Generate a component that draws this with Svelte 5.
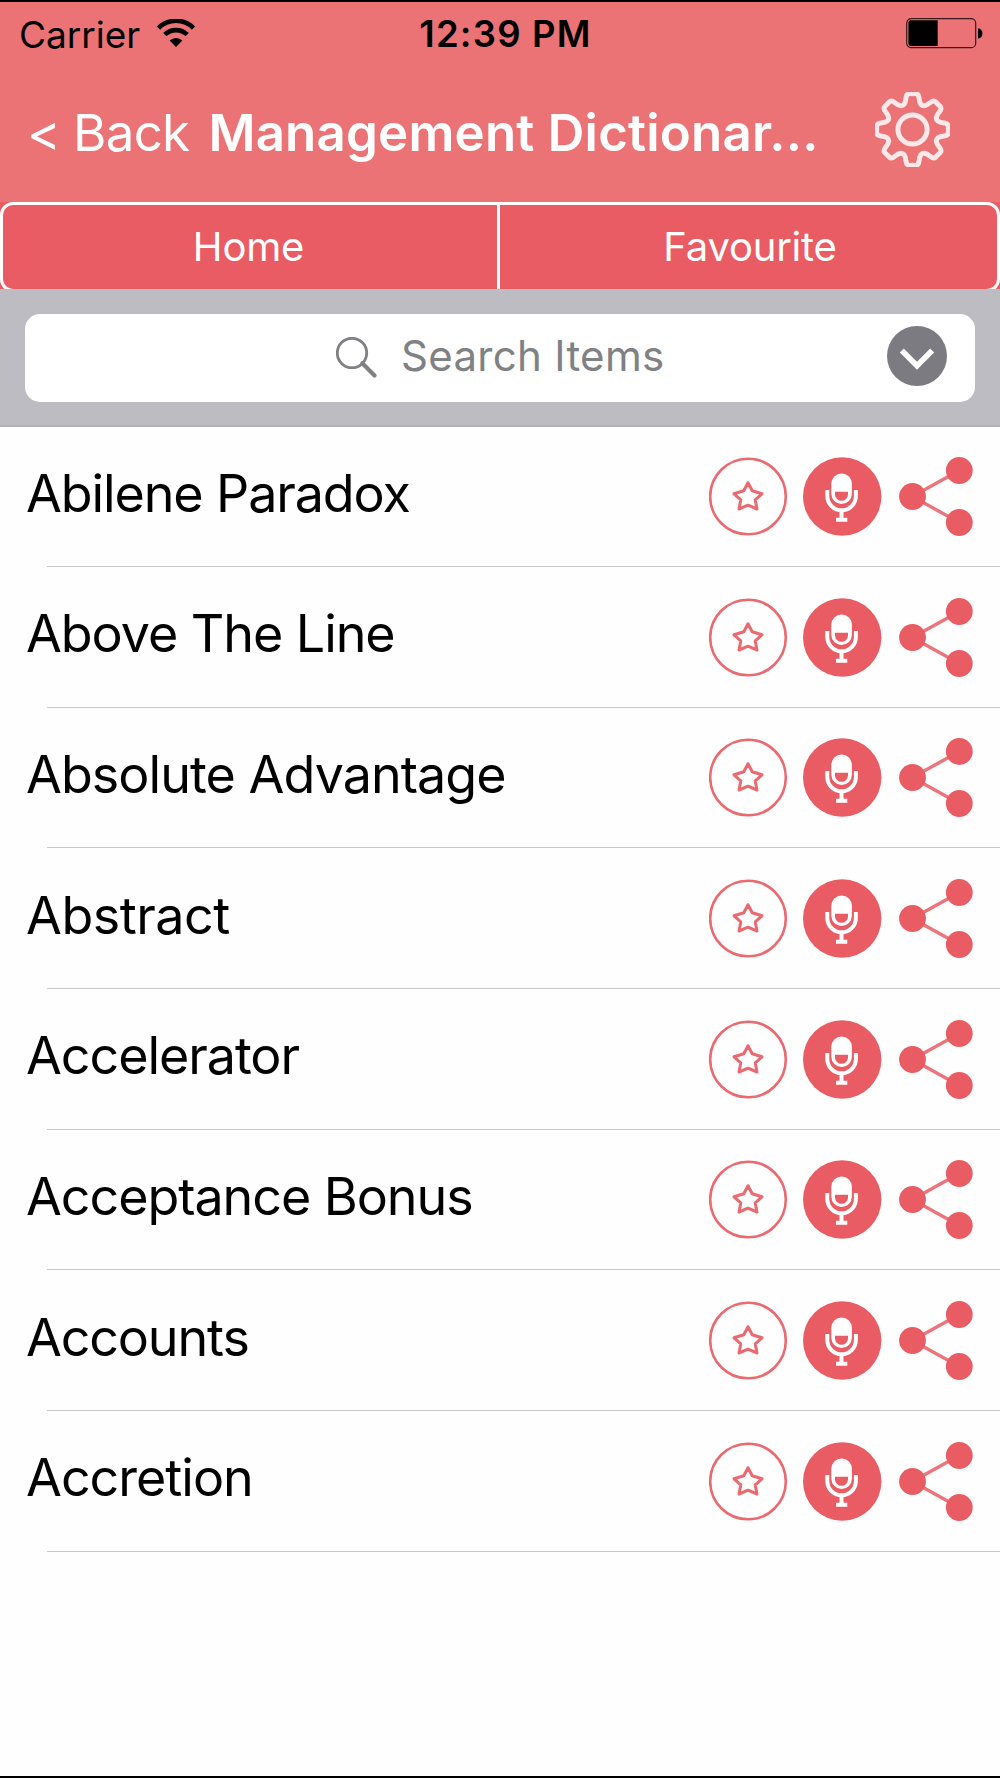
<script>
  const terms = [
    { name: 'Abilene Paradox', tracking: -1.1 },
    { name: 'Above The Line', tracking: -1.05 },
    { name: 'Absolute Advantage', tracking: -0.95 },
    { name: 'Abstract', tracking: -0.5 },
    { name: 'Accelerator', tracking: -1.05 },
    { name: 'Acceptance Bonus', tracking: -1.05 },
    { name: 'Accounts', tracking: -1.15 },
    { name: 'Accretion', tracking: -1 }
  ];

  // Gear outline: eight rounded teeth, each traced through smoothed control points.
  function gearPath() {
    const profile = [
      [-22.5, 25.5], [-14.5, 28], [-9.5, 36.5], [0, 35.8], [9.5, 36.5], [14.5, 28]
    ];
    const points = [];
    for (let tooth = 0; tooth < 8; tooth++) {
      for (const [angle, radius] of profile) {
        const a = ((tooth * 45 + angle - 90) * Math.PI) / 180;
        points.push([37.5 + radius * Math.cos(a), 37.5 + radius * Math.sin(a)]);
      }
    }
    const mid = (p, q) => `${((p[0] + q[0]) / 2).toFixed(2)} ${((p[1] + q[1]) / 2).toFixed(2)}`;
    const last = points[points.length - 1];
    let d = `M${mid(last, points[0])}`;
    points.forEach((p, i) => {
      d += `Q${p[0].toFixed(2)} ${p[1].toFixed(2)} ${mid(p, points[(i + 1) % points.length])}`;
    });
    return d + 'Z';
  }
</script>

<div class="screen">
  <header>
    <div class="status">
      <div class="carrier">
        <span>Carrier</span>
        <svg width="38" height="28" viewBox="0 0 38 28">
          <path d="M1.5 9A24.8 24.8 0 0 1 36.5 9" fill="none" stroke="#000" stroke-width="4.6" />
          <path d="M7.8 15.7A16 16 0 0 1 30.2 15.7" fill="none" stroke="#000" stroke-width="4.6" />
          <path d="M19 28L12.6 21.6A9.2 9.2 0 0 1 25.4 21.6Z" />
        </svg>
      </div>
      <span class="time">12:39 PM</span>
      <svg class="battery" width="77" height="31" viewBox="0 0 77 31">
        <rect x="0.7" y="0.7" width="69" height="29" rx="4.5" fill="none" stroke="#3a1a1c" stroke-width="1.2" />
        <path d="M4.5 2.2H31.7V28H4.5Q2.4 28 2.4 25.5V4.7Q2.4 2.2 4.5 2.2Z" />
        <path d="M72 10.3Q76.4 11 76.4 15.5T72 20.7Z" />
      </svg>
    </div>
    <nav>
      <span class="back"><span>&lt;</span><span>Back</span></span>
      <h1>Management Dictionar...</h1>
      <svg class="gear" width="75" height="75" viewBox="0 0 75 75" fill="none" stroke="#fff" stroke-opacity="0.84" stroke-width="5">
        <path d={gearPath()} />
        <circle cx="37.5" cy="37.5" r="14.6" />
      </svg>
    </nav>
  </header>

  <div class="tabs">
    <div class="frame">
      <span class="tab">Home</span>
      <span class="tab">Favourite</span>
    </div>
  </div>

  <div class="search">
    <div class="field">
      <svg class="lens" width="42" height="42" viewBox="0 0 42 42" fill="none" stroke="#808185">
        <circle cx="16" cy="16" r="14.7" stroke-width="2.8" />
        <path d="M26.3 26.3L38.5 38.5" stroke-width="4.2" stroke-linecap="round" />
      </svg>
      <span class="hint">Search Items</span>
      <svg class="drop" width="60" height="60" viewBox="0 0 60 60">
        <circle cx="30" cy="30" r="30" fill="#7c7b82" />
        <path d="M14.8 24.5L30 39.7L45.2 24.5" fill="none" stroke="#fff" stroke-width="5.6" />
      </svg>
    </div>
  </div>

  <ul>
    {#each terms as term}
      <li>
        <span class="name" style="letter-spacing: {term.tracking}px">{term.name}</span>
        <div class="actions">
          <svg width="79" height="79" viewBox="0 0 79 79" fill="none" stroke="#ea6a70">
            <circle cx="39" cy="39.5" r="37.8" stroke-width="2.6" />
            <path d="M39 25.7L43.2 33.8L53 36.8L46.2 42.8L48 52L39 48.2L30 52L31.8 42.8L25 36.8L34.8 33.8Z" stroke-width="3" stroke-linejoin="round" />
          </svg>
          <svg width="79" height="79" viewBox="0 0 79 79">
            <circle cx="39.2" cy="39.5" r="39.2" fill="#ea5c63" />
            <rect x="28.3" y="16.5" width="20.6" height="30.5" rx="10.3" fill="#fff" />
            <path d="M32 34.8H45V37.3A6.5 6.5 0 0 1 32 37.3Z" fill="#ea5c63" />
            <path d="M24.3 33V39A14.3 14.3 0 0 0 52.9 39V33" fill="none" stroke="#fff" stroke-width="4" />
            <path d="M38.5 53V63M33 62.7H44.3" fill="none" stroke="#fff" stroke-width="4" />
          </svg>
          <svg class="share" width="74" height="79" viewBox="0 0 74 79">
            <path d="M60.3 13.5L13.3 39.5L60.3 65.5" fill="none" stroke="#ec747a" stroke-width="3.4" />
            <g fill="#ea5c63">
              <circle cx="60.3" cy="13.5" r="13.4" />
              <circle cx="13.5" cy="39.5" r="13.4" />
              <circle cx="60.3" cy="65.5" r="13.4" />
            </g>
          </svg>
        </div>
      </li>
    {/each}
  </ul>
</div>

<style>
  :global(body) {
    margin: 0;
    background: #fefefe;
  }
  .screen {
    box-sizing: border-box;
    display: flex;
    flex-direction: column;
    width: 1000px;
    height: 1778px;
    border-top: 2px solid #000;
    border-bottom: 2px solid #000;
    background: #fefefe;
    font-family: Inter, "Liberation Sans", sans-serif;
    color: #000;
    overflow: hidden;
    white-space: nowrap;
  }
  svg {
    display: block;
    flex: none;
  }
  header {
    background: #eb7375;
  }
  .status {
    display: grid;
    grid-template-columns: 1fr auto 1fr;
    align-items: center;
    height: 64px;
    padding: 0 17px 0 19px;
    font-size: 37px;
  }
  .carrier {
    display: flex;
    align-items: center;
    gap: 17px;
  }
  .carrier svg {
    margin-bottom: 3px;
  }
  .time {
    font-size: 36.5px;
    font-weight: 600;
    letter-spacing: 1.2px;
    padding-left: 9px;
  }
  .battery {
    justify-self: end;
    margin-bottom: 2px;
  }
  nav {
    display: flex;
    align-items: center;
    height: 136px;
    padding: 0 50px 0 27px;
    color: #fff;
    font-size: 51px;
  }
  .back {
    display: flex;
    gap: 13px;
    padding-bottom: 3px;
    font-weight: 380;
    letter-spacing: -0.7px;
  }
  h1 {
    flex: 1;
    margin: 0 0 0 19px;
    padding-bottom: 3px;
    font-size: 51px;
    font-weight: 600;
    letter-spacing: 0.2px;
  }
  .gear {
    margin-bottom: 9px;
  }
  .tabs {
    height: 87px;
    background: #ea5c63;
    overflow: hidden;
  }
  .frame {
    box-sizing: border-box;
    display: grid;
    grid-template-columns: 494px 1fr;
    height: 90px;
    border: 3px solid #fff;
    border-radius: 13px;
  }
  .tab {
    display: flex;
    align-items: center;
    justify-content: center;
    padding: 0 3px 2px 0;
    color: #fff;
    font-size: 40px;
    font-weight: 380;
    letter-spacing: -0.2px;
  }
  .tab + .tab {
    padding: 0 0 2px 3px;
    border-left: 3px solid #fff;
  }
  .search {
    box-sizing: border-box;
    height: 138px;
    padding: 25px;
    border-bottom: 2px solid #b1b0b5;
    background: #bdbcc3;
  }
  .field {
    box-sizing: border-box;
    display: flex;
    align-items: center;
    height: 88px;
    padding: 0 28px 0 311px;
    border-radius: 15px;
    background: #fff;
  }
  .hint {
    flex: 1;
    margin: 0 0 5px 23px;
    color: #808185;
    font-size: 42px;
    letter-spacing: 0.3px;
  }
  .drop {
    margin-bottom: 5px;
  }
  ul {
    margin: -0.8px 0 0;
    padding: 0;
    list-style: none;
  }
  li {
    box-sizing: border-box;
    display: flex;
    align-items: center;
    justify-content: space-between;
    height: 140.7px;
    padding: 0 27px 0 26px;
    background: linear-gradient(#c8c7cc, #c8c7cc) 47px 100% / 100% 1px no-repeat;
  }
  .name {
    padding-bottom: 7px;
    font-size: 52px;
  }
  .actions {
    display: flex;
    gap: 15px;
  }
  .share {
    margin-left: 2px;
  }
</style>
